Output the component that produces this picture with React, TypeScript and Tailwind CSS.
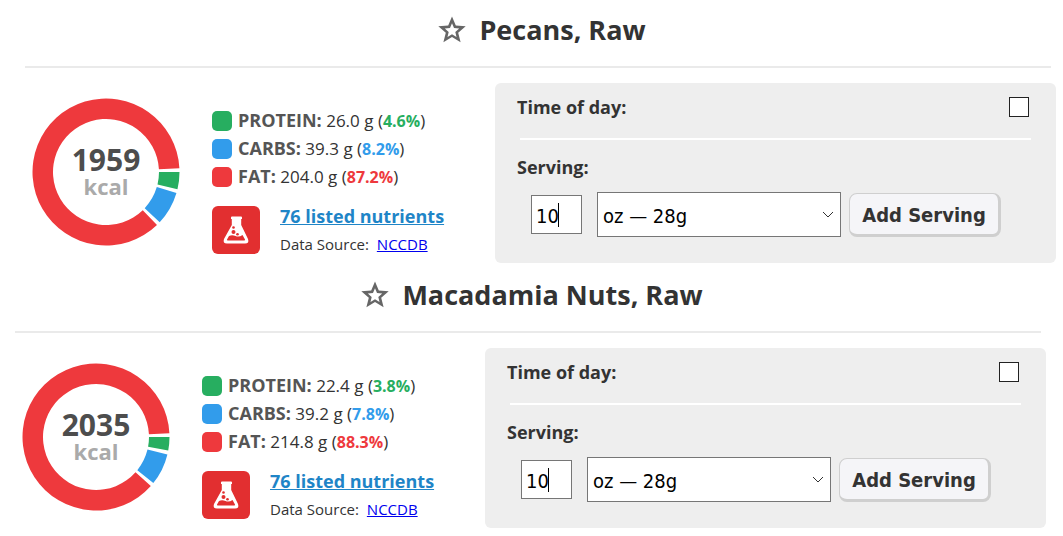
import { useId } from "react";

type Macro = { label: string; grams: string; percent: number };

type Food = {
  name: string;
  kcal: number;
  inset: string;
  macros: Macro[];
};

const FOODS: Food[] = [
  {
    name: "Pecans, Raw",
    kcal: 1959,
    inset: "pl-[25px] pr-[7px]",
    macros: [
      { label: "PROTEIN", grams: "26.0", percent: 4.6 },
      { label: "CARBS", grams: "39.3", percent: 8.2 },
      { label: "FAT", grams: "204.0", percent: 87.2 },
    ],
  },
  {
    name: "Macadamia Nuts, Raw",
    kcal: 2035,
    inset: "pl-[15px] pr-[17px]",
    macros: [
      { label: "PROTEIN", grams: "22.4", percent: 3.8 },
      { label: "CARBS", grams: "39.2", percent: 7.8 },
      { label: "FAT", grams: "214.8", percent: 88.3 },
    ],
  },
];

const MACRO_STYLES = [
  { fill: "#27ae60", swatch: "bg-[#27ae60]", text: "text-[#27ae60]" },
  { fill: "#329ceb", swatch: "bg-[#329ceb]", text: "text-[#329ceb]" },
  { fill: "#ee393d", swatch: "bg-[#ee393d]", text: "text-[#ee393d]" },
];

const OUTER = 73.5;
const INNER = 53;
const GAP = 3; // degrees left empty after each slice

const point = (radius: number, deg: number) => {
  const rad = (deg * Math.PI) / 180;
  return `${74 + radius * Math.cos(rad)} ${74 + radius * Math.sin(rad)}`;
};

const slicePath = (from: number, to: number) => {
  const large = to - from > 180 ? 1 : 0;
  return [
    `M${point(OUTER, from)}`,
    `A${OUTER} ${OUTER} 0 ${large} 1 ${point(OUTER, to)}`,
    `L${point(INNER, to)}`,
    `A${INNER} ${INNER} 0 ${large} 0 ${point(INNER, from)}Z`,
  ].join("");
};

const CalorieRing = ({ kcal, macros }: { kcal: number; macros: Macro[] }) => {
  const starts = macros.map((_, i) =>
    macros.slice(0, i).reduce((sum, m) => sum + m.percent * 3.6, 0)
  );

  return (
    <div className="grid shrink-0 place-items-center">
      <svg width="148" height="148" viewBox="0 0 148 148" className="col-start-1 row-start-1">
        {macros.map((macro, i) => (
          <path
            key={macro.label}
            d={slicePath(starts[i], (starts[i + 1] ?? 360) - GAP)}
            fill={MACRO_STYLES[i].fill}
          />
        ))}
      </svg>
      <div className="col-start-1 row-start-1 text-center font-bold">
        <div className="text-[30px] leading-7 text-[#4d4d4d]">{kcal}</div>
        <div className="text-[22px] leading-6 text-[#aaaaaa]">kcal</div>
      </div>
    </div>
  );
};

const StarIcon = () => (
  <svg width="30" height="28" viewBox="0 0 30 28">
    <path
      d="M15 .5l3.800 9 9.900.8-7.500 6.400 2.400 9.600-8.600-5.200-8.600 5.200 2.400-9.600L1.300 10.300l9.900-.8zM15 7.300l-2 4.700-5.200.5 3.900 3.400-1.200 5.100 4.500-2.700 4.500 2.700-1.200-5.100 3.900-3.400-5.200-.5z"
      fill="#666"
      fillRule="evenodd"
    />
  </svg>
);

const FlaskIcon = () => (
  <svg width="48" height="48" viewBox="0 0 48 48" className="shrink-0 rounded-md bg-[#e22f30]">
    <path
      d="M20 10.500q-1 0-1 1v1.500h.8v6L12 33q-1.500 4.500 3 4.500h18q4.500 0 3-4.500l-6.800-14v-6h.8v-1.500q0-1-1-1z"
      fill="#fff"
    />
    <path d="M17 30q3-1.500 6.500 0t7-1l2.500 4.500q.3 1-.8 1H15.800q-1.100 0-.8-1z" fill="#e22f30" />
    <circle cx="21.500" cy="21.500" r="1.300" fill="#e22f30" />
    <circle cx="21.500" cy="26" r="2" fill="#e22f30" />
    <circle cx="25.500" cy="28.200" r="1.300" fill="#e22f30" />
  </svg>
);

const MacroList = ({ macros }: { macros: Macro[] }) => (
  <ul>
    {macros.map((macro, i) => (
      <li key={macro.label} className="flex h-7 items-center whitespace-nowrap text-[17px] text-[#333]">
        <span className={`mr-1.5 size-5 rounded-[5px] ${MACRO_STYLES[i].swatch}`} />
        <span className="pb-0.5">
          <b className="text-lg text-[#555]">{macro.label}:</b> {macro.grams} g (
          <b className={`text-base ${MACRO_STYLES[i].text}`}>{macro.percent}%</b>)
        </span>
      </li>
    ))}
  </ul>
);

const ServingPanel = () => {
  const id = useId();

  return (
    <form className="w-[561px] shrink-0 rounded-md bg-[#eeeeee] pt-3.5 pr-[25px] pb-[26px] pl-[22px] text-lg font-bold text-[#333]">
      <div className="flex h-5 items-center justify-between">
        <label htmlFor={`${id}-time`}>Time of day:</label>
        <input
          id={`${id}-time`}
          type="checkbox"
          className="mr-0.5 size-5 appearance-none border border-[#222] bg-white"
        />
      </div>
      <hr className="mt-[21px] ml-[3px] border-t-2 border-white" />
      <label htmlFor={`${id}-amount`} className="mt-[13px] block leading-7">
        Serving:
      </label>
      <div className="mt-[11px] flex items-center pl-3.5 font-['DejaVu_Sans_Condensed','DejaVu_Sans',sans-serif] text-xl font-normal text-black">
        <div className="relative">
          <input
            id={`${id}-amount`}
            type="text"
            defaultValue="10"
            className="block h-[39px] w-[51px] border border-[#767676] bg-white px-1 pt-0.5"
          />
          <span className="absolute top-2 left-[27px] h-6 w-px bg-black" />
        </div>
        <div className="relative ml-[15px]">
          <select
            aria-label="Serving size"
            className="block h-[45px] w-[244px] appearance-none border border-[#767676] bg-white px-[5px] pt-0.5"
          >
            <option>oz — 28g</option>
          </select>
          <svg
            width="12"
            height="8"
            viewBox="0 0 12 8"
            className="pointer-events-none absolute top-[19px] right-[7px]"
            fill="none"
            stroke="#333"
          >
            <path d="M1 1l5 5 5-5" />
          </svg>
        </div>
        <button
          type="button"
          className="ml-2 h-11 w-[152px] rounded-lg border border-r-[3px] border-b-[3px] border-[#cfcfcf] bg-[#f5f5f8] pt-0.5 font-bold whitespace-nowrap text-[#333]"
        >
          Add Serving
        </button>
      </div>
    </form>
  );
};

const FoodSection = ({ food }: { food: Food }) => (
  <section className={`h-[265px] ${food.inset}`}>
    <header className="mr-[5px] flex h-[68px] items-center justify-center gap-3 border-b-2 border-[#eaeaea] pb-1.5 pl-[7px]">
      <button type="button" aria-label={`Favorite ${food.name}`}>
        <StarIcon />
      </button>
      <h2 className="text-[27px] font-bold text-[#333]">{food.name}</h2>
    </header>
    <div className="flex items-start justify-between pt-[15px]">
      <div className="flex items-start pt-[15px] pl-[7px]">
        <CalorieRing kcal={food.kcal} macros={food.macros} />
        <div className="ml-8 pt-[9px]">
          <MacroList macros={food.macros} />
          <div className="mt-[15px] flex gap-5">
            <FlaskIcon />
            <div className="-mt-0.5 whitespace-nowrap text-[#333]">
              <a href="#nutrients" className="block text-lg leading-6 font-bold text-[#1f85c7] underline">
                76 listed nutrients
              </a>
              <p className="mt-1 text-[15px] leading-6">
                Data Source:{" "}
                <a href="#nccdb" className="ml-1 text-[#0000ee] underline">
                  NCCDB
                </a>
              </p>
            </div>
          </div>
        </div>
      </div>
      <ServingPanel />
    </div>
  </section>
);

export default function App() {
  return (
    <main className="bg-white font-['Open_Sans','Noto_Sans',sans-serif]">
      {FOODS.map((food) => (
        <FoodSection key={food.name} food={food} />
      ))}
    </main>
  );
}
